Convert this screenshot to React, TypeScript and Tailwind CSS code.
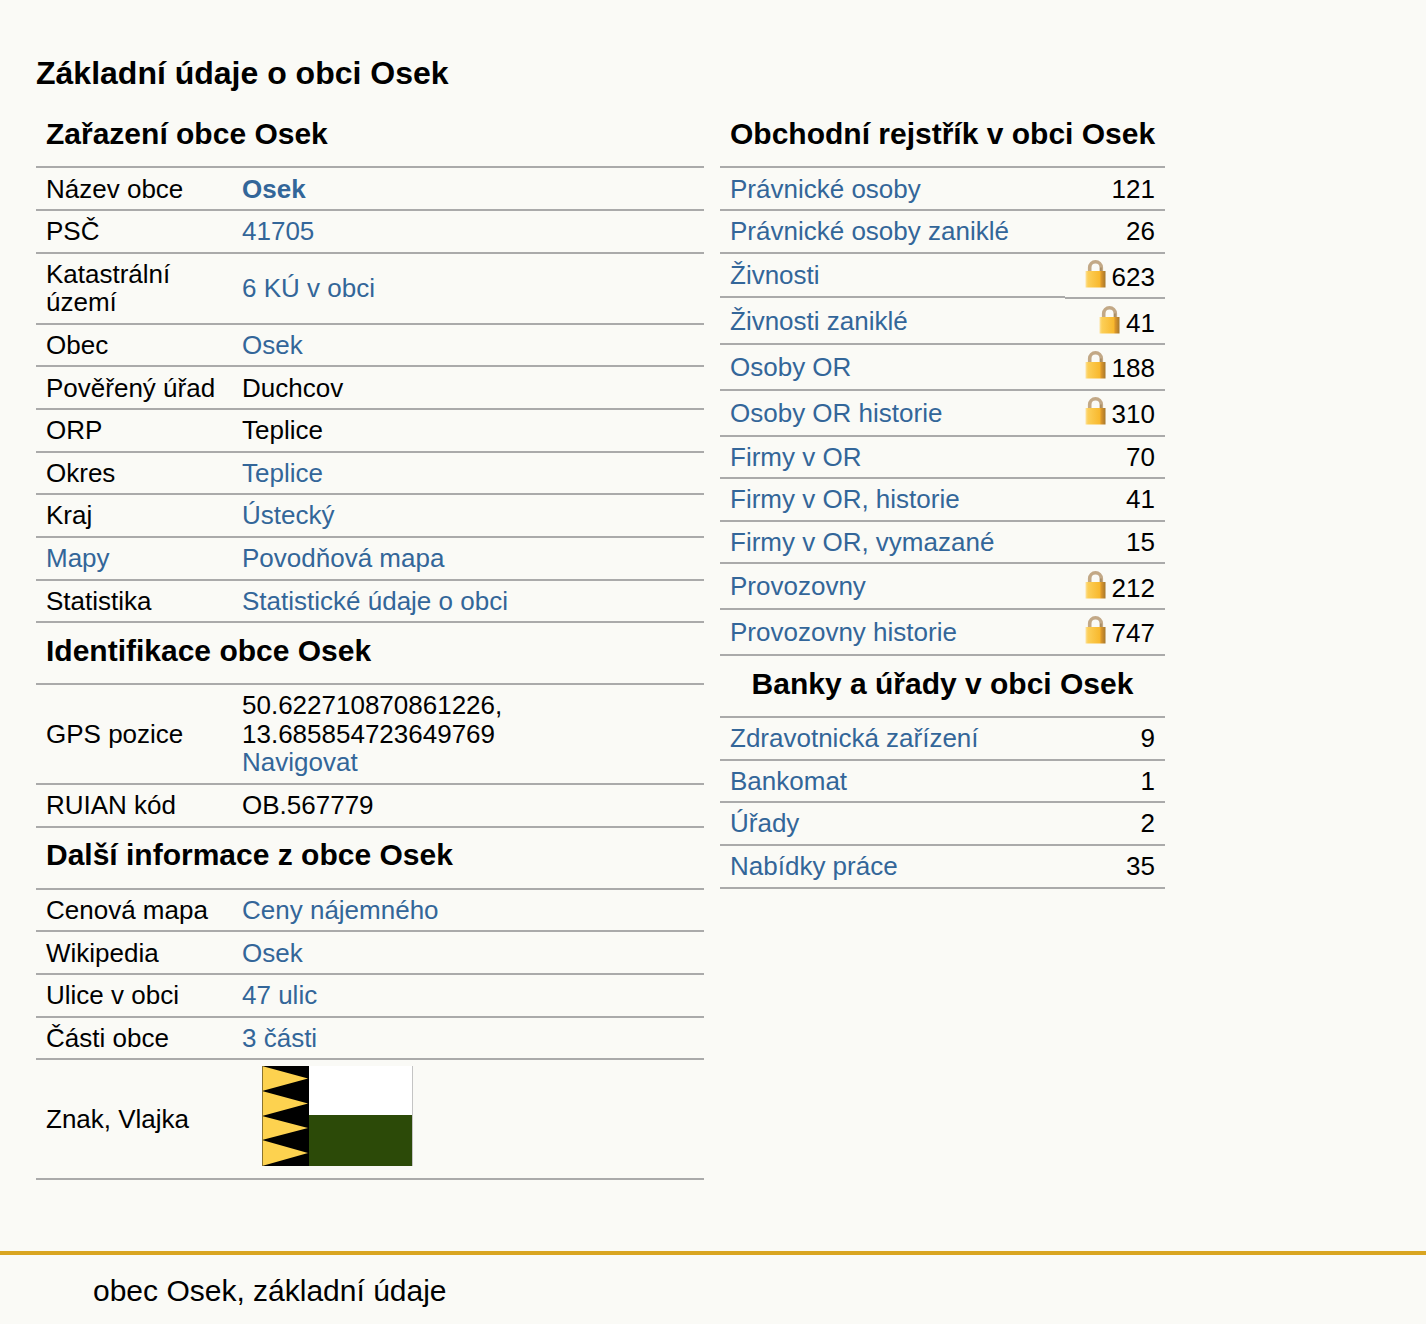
const link = 'text-[#336699]';

type Row = { label: string; labelLink?: boolean; value: React.ReactNode };

const Lock = () => (
  <svg width="21" height="28" viewBox="0 0 21 28" className="inline-block align-top">
    <defs>
      <linearGradient id="lockBody" x1="0" x2="1" y1="0" y2="0">
        <stop offset="0" stopColor="#fde3a0" />
        <stop offset="0.12" stopColor="#fccf58" />
        <stop offset="0.7" stopColor="#f8b92f" />
        <stop offset="0.8" stopColor="#d9952a" />
        <stop offset="1" stopColor="#a5772c" />
      </linearGradient>
    </defs>
    <path d="M4.7 13V7.6a5.8 5.8 0 0 1 11.6 0V13" fill="none" stroke="#c2a886" strokeWidth="3.6" />
    <path d="M15.9 13V7.6" fill="none" stroke="#a58a60" strokeWidth="1.6" />
    <rect x="0.5" y="11" width="20" height="16.5" fill="url(#lockBody)" />
  </svg>
);

const Flag = () => (
  <svg width="151" height="100" viewBox="0 0 151 100" className="block">
    <rect x="0" y="0" width="47" height="100" fill="#000" />
    <path d="M0 0L46 12.5L0 25ZM0 25L46 37.5L0 50ZM0 50L46 62L0 74ZM0 74L46 87L0 100Z" fill="#fdd24f" />
    <rect x="0" y="0" width="1" height="100" fill="#8a7430" />
    <rect x="47" y="0" width="103" height="49" fill="#fff" />
    <rect x="47" y="49" width="103" height="51" fill="#2c4a08" />
    <rect x="150" y="0" width="1" height="100" fill="#c4c4c4" />
  </svg>
);

const A = ({ children, bold }: { children: React.ReactNode; bold?: boolean }) => (
  <a className={`${link} ${bold ? 'font-bold' : ''}`}>{children}</a>
);

const zarazeni: Row[] = [
  { label: 'Název obce', value: <A bold>Osek</A> },
  { label: 'PSČ', value: <A>41705</A> },
  { label: 'Katastrální území', value: <A>6 KÚ v obci</A> },
  { label: 'Obec', value: <A>Osek</A> },
  { label: 'Pověřený úřad', value: 'Duchcov' },
  { label: 'ORP', value: 'Teplice' },
  { label: 'Okres', value: <A>Teplice</A> },
  { label: 'Kraj', value: <A>Ústecký</A> },
  { label: 'Mapy', labelLink: true, value: <A>Povodňová mapa</A> },
  { label: 'Statistika', value: <A>Statistické údaje o obci</A> },
];

const identifikace: Row[] = [
  {
    label: 'GPS pozice',
    value: (
      <>
        50.622710870861226,
        <br />
        13.685854723649769
        <br />
        <A>Navigovat</A>
      </>
    ),
  },
  { label: 'RUIAN kód', value: 'OB.567779' },
];

const dalsi: Row[] = [
  { label: 'Cenová mapa', value: <A>Ceny nájemného</A> },
  { label: 'Wikipedia', value: <A>Osek</A> },
  { label: 'Ulice v obci', value: <A>47 ulic</A> },
  { label: 'Části obce', value: <A>3 části</A> },
];

const rejstrik: [string, number, boolean?][] = [
  ['Právnické osoby', 121],
  ['Právnické osoby zaniklé', 26],
  ['Živnosti', 623, true],
  ['Živnosti zaniklé', 41, true],
  ['Osoby OR', 188, true],
  ['Osoby OR historie', 310, true],
  ['Firmy v OR', 70],
  ['Firmy v OR, historie', 41],
  ['Firmy v OR, vymazané', 15],
  ['Provozovny', 212, true],
  ['Provozovny historie', 747, true],
];

const banky: [string, number, boolean?][] = [
  ['Zdravotnická zařízení', 9],
  ['Bankomat', 1],
  ['Úřady', 2],
  ['Nabídky práce', 35],
];

const Heading = ({ children, center }: { children: React.ReactNode; center?: boolean }) => (
  <h3 className={`h-[62.2px] border-b-2 border-[#aaaaaa] pt-[10.6px] text-[30px] font-bold leading-[34px] ${center ? 'text-center' : 'pl-[10px]'}`}>
    {children}
  </h3>
);

const InfoRows = ({ rows }: { rows: Row[] }) => (
  <>
    {rows.map((r) => (
      <div key={r.label} className="flex items-center border-b-2 border-[#aaaaaa] py-[6.07px]">
        <div className={`w-[206px] shrink-0 pl-[10px] pr-[10px] ${r.labelLink ? link : ''}`}>{r.label}</div>
        <div>{r.value}</div>
      </div>
    ))}
  </>
);

const Count = ({ count, locked }: { count: number; locked?: boolean }) => (
  <span className={`flex items-start gap-[6px] ${locked ? 'h-[31.6px]' : ''}`}>
    {locked && <Lock />}
    <span className={locked ? 'pt-[3px]' : ''}>{count}</span>
  </span>
);

const CountRows = ({ rows }: { rows: [string, number, boolean?][] }) => (
  <>
    {rows.map(([name, count, locked]) =>
      // the Živnosti row: its line sits 1px lower under the number cell
      name === 'Živnosti' ? (
        <div key={name} className="flex items-start">
          <div className="flex h-[44.72px] flex-1 items-center border-b-2 border-[#aaaaaa] pl-[10px]">
            <a className={link}>{name}</a>
          </div>
          <div className="flex w-[100px] justify-end border-b-2 border-[#aaaaaa] py-[6.07px] pr-[10px]">
            <Count count={count} locked={locked} />
          </div>
        </div>
      ) : (
        <div key={name} className="flex items-center justify-between border-b-2 border-[#aaaaaa] px-[10px] py-[6.07px]">
          <a className={link}>{name}</a>
          <Count count={count} locked={locked} />
        </div>
      ),
    )}
  </>
);

export default function App() {
  return (
    <div className="min-h-[1324px] bg-[#fafaf6] font-['Liberation_Sans',Arial,sans-serif] text-[26px] leading-[28.5px] text-black">
      <div className="h-[1251px] pl-[36px] pt-[55px]">
        <h2 className="text-[32px] font-bold leading-[36px]">Základní údaje o obci Osek</h2>
        <div className="mt-[15.3px] flex items-start gap-[16px]">
          <div className="w-[668px]">
            <Heading>Zařazení obce Osek</Heading>
            <InfoRows rows={zarazeni} />
            <Heading>Identifikace obce Osek</Heading>
            <InfoRows rows={identifikace} />
            <Heading>Další informace z obce Osek</Heading>
            <InfoRows rows={dalsi} />
            <div className="flex h-[120px] items-center border-b-2 border-[#aaaaaa]">
              <div className="w-[206px] shrink-0 pl-[10px]">Znak, Vlajka</div>
              <div className="ml-[20px] -mt-[6px]">
                <Flag />
              </div>
            </div>
          </div>
          <div className="w-[445px]">
            <Heading>Obchodní rejstřík v obci Osek</Heading>
            <CountRows rows={rejstrik} />
            <Heading center>Banky a úřady v obci Osek</Heading>
            <CountRows rows={banky} />
          </div>
        </div>
      </div>
      <footer className="h-[73px] border-t-4 border-[#d9a521] pl-[93px] pt-[19px] text-[30px] leading-[34px]">
        obec Osek, základní údaje
      </footer>
    </div>
  );
}
